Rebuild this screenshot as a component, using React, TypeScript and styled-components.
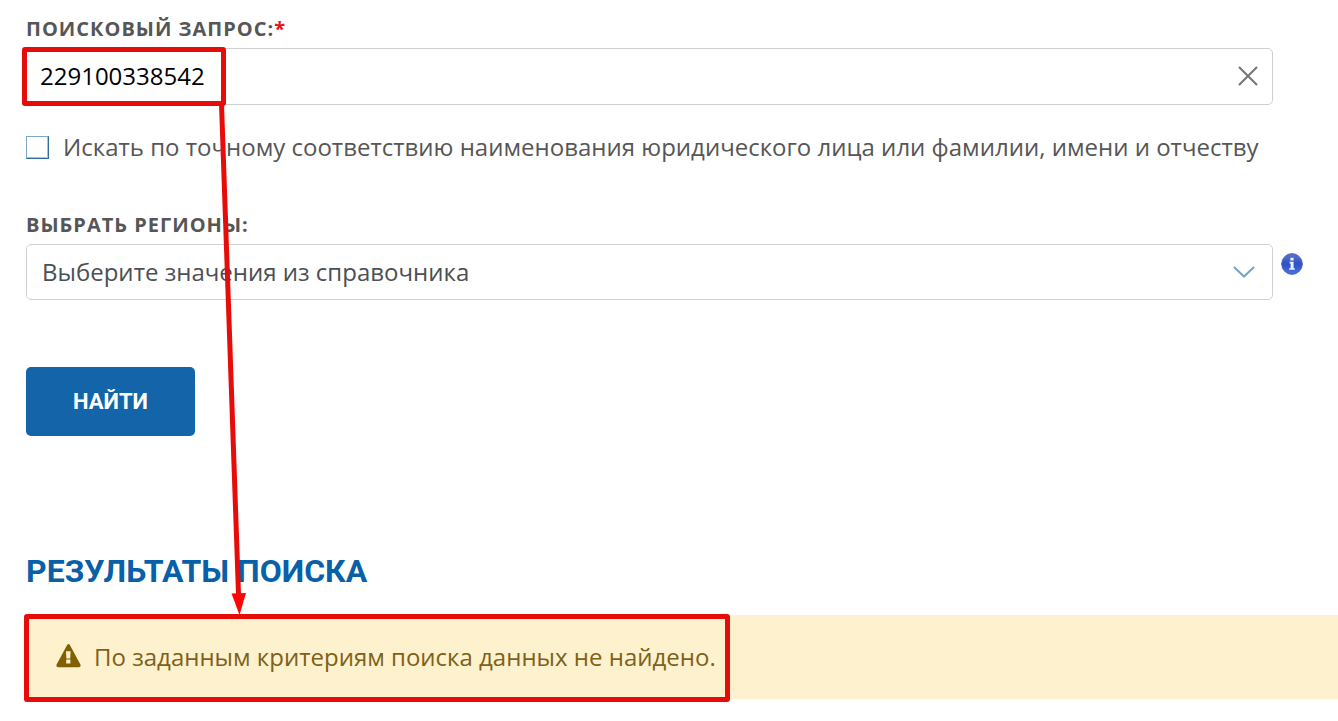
import React, { useState } from "react";
import styled, { createGlobalStyle } from "styled-components";

const GlobalStyle = createGlobalStyle`
  *, *::before, *::after { box-sizing: border-box; }
  body {
    margin: 0;
    background: #fff;
    color: #565656;
    font-family: "Open Sans", "Noto Sans", sans-serif;
    font-size: 24px;
    line-height: 32px;
  }
`;

const Page = styled.main`
  position: relative;
  padding: 15px 0 20px 26px;
`;

const Form = styled.form`
  display: flex;
  flex-direction: column;
  align-items: flex-start;
  margin-right: 65px;
`;

const FieldLabel = styled.label`
  font-size: 20px;
  line-height: 28px;
  font-weight: 700;
  letter-spacing: 1px;
  text-transform: uppercase;
  margin-bottom: 5px;
`;

const Required = styled.span`
  color: #e8121c;
`;

const Field = styled.div`
  position: relative;
  width: 100%;
`;

const TextInput = styled.input`
  display: block;
  width: 100%;
  height: 57px;
  padding: 0 56px 2px 13px;
  border: 1px solid #cfcfcf;
  border-radius: 5px;
  background: #fff;
  color: #000;
  font: inherit;
  outline: none;
`;

const ClearButton = styled.button`
  position: absolute;
  top: 0;
  right: 4px;
  width: 42px;
  height: 56px;
  padding: 0;
  border: 0;
  background: none;
  display: flex;
  align-items: center;
  justify-content: center;
  cursor: pointer;
`;

const CheckRow = styled.label`
  display: flex;
  align-items: center;
  gap: 14px;
  margin: 26px 0 48px;
`;

const CheckBox = styled.input`
  appearance: none;
  flex: none;
  width: 23px;
  height: 23px;
  margin: 0;
  border: 1px solid;
  border-color: #7fa6c4 #2f6d9d #2f6d9d #7fa6c4;
  background: #fff;
  box-shadow: inset -1px -1px 0 #a9c4d9;
  &:checked { background: #1364a9; }
`;

const Select = styled.select`
  appearance: none;
  display: block;
  width: 100%;
  height: 56px;
  padding: 0 56px 0 15px;
  border: 1px solid #cfcfcf;
  border-radius: 5px;
  background: #fff;
  color: #4c4f53;
  font: inherit;
  outline: none;
`;

const Chevron = styled.svg`
  position: absolute;
  right: 18px;
  top: 21px;
  pointer-events: none;
`;

const InfoButton = styled.button`
  position: absolute;
  left: 100%;
  top: 9px;
  margin-left: 8px;
  padding: 0;
  border: 0;
  background: none;
  line-height: 0;
`;

const SubmitButton = styled.button`
  margin-top: 67px;
  width: 169px;
  height: 69px;
  border: 0;
  border-radius: 5px;
  background: #1364a9;
  color: #fff;
  font-family: Roboto, sans-serif;
  font-size: 22px;
  font-weight: 700;
  text-transform: uppercase;
`;

const Heading = styled.h2`
  margin: 115px 0 24px;
  color: #0860a8;
  font-family: Roboto, sans-serif;
  font-size: 32px;
  line-height: 40px;
  font-weight: 700;
  text-transform: uppercase;
`;

const Alert = styled.div`
  position: relative;
  display: flex;
  align-items: center;
  gap: 13px;
  height: 84px;
  padding-left: 30px;
  background: #fef1cd;
  color: #7d6218;
`;

const Frame = styled.div<{ $left: number; $width: number; $bottom: number }>`
  position: absolute;
  top: -1px;
  bottom: ${(p) => p.$bottom}px;
  left: ${(p) => p.$left}px;
  width: ${(p) => p.$width}px;
  border: 5px solid #e60c0a;
  border-radius: 3px;
  pointer-events: none;
`;

const Arrow = styled.svg`
  position: absolute;
  left: 210px;
  top: 102px;
  pointer-events: none;
`;

export default function App() {
  const [query, setQuery] = useState("229100338542");
  return (
    <>
      <GlobalStyle />
      <Page>
        <Form onSubmit={(e) => e.preventDefault()}>
          <FieldLabel htmlFor="query">
            Поисковый запрос:<Required>*</Required>
          </FieldLabel>
          <Field>
            <TextInput id="query" value={query} onChange={(e) => setQuery(e.target.value)} />
            <ClearButton type="button" aria-label="Очистить" onClick={() => setQuery("")}>
              <svg width="20" height="20" viewBox="0 0 20 20" fill="none" stroke="#747474" strokeWidth="2">
                <path d="M1 1L19 19M19 1L1 19" />
              </svg>
            </ClearButton>
            <Frame $left={-4} $width={204} $bottom={-1} />
          </Field>
          <CheckRow>
            <CheckBox type="checkbox" />
            Искать по точному соответствию наименования юридического лица или фамилии, имени и отчеству
          </CheckRow>
          <FieldLabel htmlFor="regions">Выбрать регионы:</FieldLabel>
          <Field>
            <Select id="regions">
              <option>Выберите значения из справочника</option>
            </Select>
            <Chevron width="22" height="14" viewBox="0 0 22 14" fill="none" stroke="#74a3cc" strokeWidth="2">
              <path d="M1 2L11 11.5L21 2" />
            </Chevron>
            <InfoButton type="button" aria-label="Справка">
              <svg width="22" height="22" viewBox="0 0 22 22">
                <defs>
                  <linearGradient id="ball" x1="0" y1="0" x2="0" y2="1">
                    <stop offset="0" stopColor="#5b78c8" />
                    <stop offset="0.5" stopColor="#2d50c4" />
                    <stop offset="1" stopColor="#4a72e6" />
                  </linearGradient>
                </defs>
                <circle cx="11" cy="11" r="10.4" fill="url(#ball)" stroke="#4a60ad" strokeWidth="0.8" />
                <path d="M9.4 4.8h3.2v2.6h-3.2zM8.6 8.8h4v6.4h1.2v1.6H8.2v-1.6h1.4v-4.8H8.6z" fill="#e9f0ff" />
              </svg>
            </InfoButton>
          </Field>
          <SubmitButton type="submit">Найти</SubmitButton>
        </Form>
        <Heading>Результаты поиска</Heading>
        <Alert role="alert">
          <svg width="25" height="26" viewBox="0 0 25 26">
            <path
              fillRule="evenodd"
              fill="#806000"
              d="M11 1.2Q12.5-1 14 1.2L24.4 20.6Q25.2 23 22.8 23.2H2.2Q-0.2 23 0.6 20.6ZM10 7.2L10.4 14.4H14.2L14.6 7.2ZM10.2 15.6V19.4H14.4V15.6Z"
            />
          </svg>
          <span>По заданным критериям поиска данных не найдено.</span>
          <Frame $left={-2} $width={706} $bottom={-3} />
        </Alert>
        <Arrow width="44" height="514" viewBox="0 0 44 514">
          <path d="M11.5 2L28.5 492" stroke="#e60c0a" strokeWidth="5" />
          <path d="M21.5 491.5L36 491L29.5 513Z" fill="#fb0505" />
        </Arrow>
      </Page>
    </>
  );
}
